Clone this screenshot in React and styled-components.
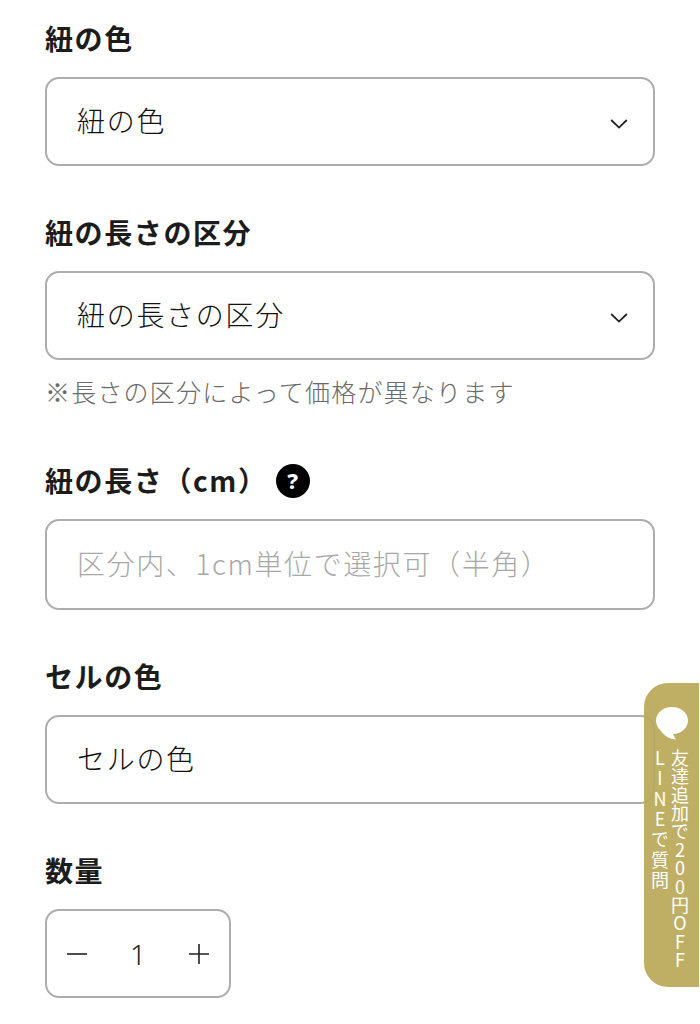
import React from 'react';
import styled, { createGlobalStyle } from 'styled-components';

const GlobalStyle = createGlobalStyle`
  html, body {
    margin: 0;
    padding: 0;
    background: #fff;
  }
  body {
    font-family: "Noto Sans CJK JP", "Noto Sans", sans-serif;
    color: #1f1f1f;
  }
  input::placeholder {
    color: #a8a8a8;
    opacity: 1;
  }
`;

const Page = styled.div`
  position: relative;
  width: 700px;
  height: 1024px;
  overflow: hidden;
  box-sizing: border-box;
  padding: 18px 46px 0 45px;
`;

const Field = styled.div`
  margin-bottom: ${(p) => p.$gap || 46}px;
`;

const Label = styled.div`
  display: flex;
  align-items: center;
  height: 41px;
  margin-bottom: 18px;
  font-size: 28px;
  line-height: 41px;
  font-weight: 700;
  letter-spacing: 1.6px;
  color: #1c1c1c;
`;

const Help = styled.span`
  display: flex;
  align-items: center;
  justify-content: center;
  width: 34px;
  height: 34px;
  margin: 0 0 0 8px;
  border-radius: 50%;
  background: #000;
  color: #fff;
  font-family: "Noto Sans", sans-serif;
  font-size: 22px;
  font-weight: 800;
  letter-spacing: 0;
`;

const Box = styled.div`
  display: flex;
  align-items: center;
  justify-content: space-between;
  box-sizing: border-box;
  width: 610px;
  height: 89px;
  padding: 0 25px 4px 30px;
  border: 2px solid #adadad;
  border-radius: 14px;
  background: #fff;
  font-size: 28px;
  font-weight: 300;
  letter-spacing: 1.7px;
  color: #111;
`;

const Caret = styled.span`
  display: flex;
  margin-top: 8px;
`;

const TextInput = styled.input`
  display: block;
  box-sizing: border-box;
  width: 610px;
  height: 91px;
  padding: 0 30px 4px;
  border: 2px solid #adadad;
  border-radius: 14px;
  outline: none;
  background: #fff;
  font-family: "Noto Sans CJK JP", "Noto Sans", sans-serif;
  font-size: 28px;
  font-weight: 300;
  letter-spacing: 1.6px;
`;

const Note = styled.p`
  margin: 13px 0 0;
  font-size: 25px;
  font-weight: 300;
  line-height: 36px;
  letter-spacing: 1.2px;
  color: #6a6a6a;
`;

const Stepper = styled.div`
  display: flex;
  align-items: center;
  justify-content: space-between;
  box-sizing: border-box;
  width: 186px;
  height: 89px;
  padding: 0 20px;
  border: 2px solid #adadad;
  border-radius: 14px;
  color: #222;
`;

const Count = styled.span`
  font-family: "Noto Sans", sans-serif;
  font-size: 28px;
  font-weight: 300;
`;

const LineTab = styled.div`
  position: absolute;
  top: 683px;
  left: 644px;
  width: 55px;
  height: 304px;
  box-sizing: border-box;
  padding-top: 23px;
  display: flex;
  flex-direction: column;
  align-items: center;
  border-radius: 24px 0 0 24px;
  background: rgba(186, 168, 88, 0.92);
  color: #fff;
`;

const BubbleWrap = styled.span`
  display: flex;
  flex-shrink: 0;
`;

const TabText = styled.div`
  align-self: flex-end;
  margin: 9px 9px 0 0;
  writing-mode: vertical-rl;
  white-space: nowrap;
  font-size: 18px;
  font-weight: 400;
  line-height: 20px;
`;

const TabLine = styled.span`
  display: block;
  text-orientation: upright;
  letter-spacing: ${(p) => p.$spacing}px;
`;

const Chevron = () => (
  <Caret>
    <svg width="18" height="10" viewBox="0 0 18 10" fill="none">
      <path d="M1.2 1 L9 8.6 L16.8 1" stroke="#222" strokeWidth="1.8" />
    </svg>
  </Caret>
);

const Minus = () => (
  <svg width="20" height="20" viewBox="0 0 20 20" fill="none">
    <path d="M0 10 H20" stroke="#222" strokeWidth="1.6" />
  </svg>
);

const Plus = () => (
  <svg width="20" height="20" viewBox="0 0 20 20" fill="none">
    <path d="M0 10 H20 M10 0 V20" stroke="#222" strokeWidth="1.6" />
  </svg>
);

const Bubble = () => (
  <BubbleWrap>
    <svg width="34" height="34" viewBox="0 0 34 34">
      <path
        d="M17 1 C26 1 33 7 33 14.5 C33 22 26 28 18 28 C19 30 20 32 21 33.5 C15 33 9 30 6 25 C3 22 1 19 1 14.5 C1 7 8 1 17 1 Z"
        fill="#fff"
      />
    </svg>
  </BubbleWrap>
);

const App = () => {
  return (
    <Page>
      <GlobalStyle />
      <Field>
        <Label>紐の色</Label>
        <Box>
          紐の色
          <Chevron />
        </Box>
      </Field>
      <Field $gap={51}>
        <Label>紐の長さの区分</Label>
        <Box>
          紐の長さの区分
          <Chevron />
        </Box>
        <Note>※長さの区分によって価格が異なります</Note>
      </Field>
      <Field>
        <Label>
          紐の長さ（cm）
          <Help>?</Help>
        </Label>
        <TextInput placeholder="区分内、1cm単位で選択可（半角）" />
      </Field>
      <Field>
        <Label>セルの色</Label>
        <Box>セルの色</Box>
      </Field>
      <Field>
        <Label>数量</Label>
        <Stepper>
          <Minus />
          <Count>1</Count>
          <Plus />
        </Stepper>
      </Field>
      <LineTab>
        <Bubble />
        <TabText>
          <TabLine $spacing={0.4}>友達追加で200円OFF</TabLine>
          <TabLine $spacing={2.4}>LINEで質問</TabLine>
        </TabText>
      </LineTab>
    </Page>
  );
};

export default App;
